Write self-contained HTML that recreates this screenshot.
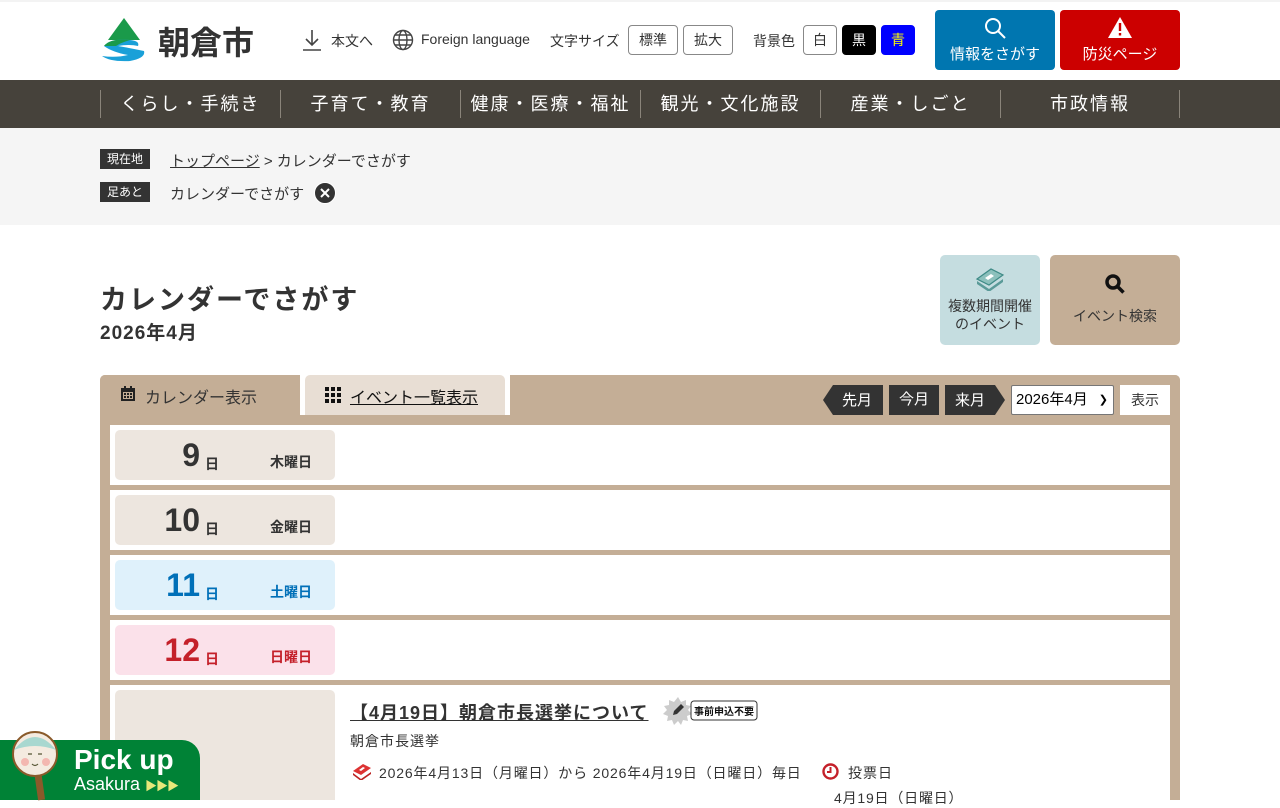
<!DOCTYPE html>
<html><head><meta charset="utf-8">
<style>
*{margin:0;padding:0;box-sizing:border-box}
body{width:1280px;height:800px;overflow:hidden;background:#fff;font-family:"Liberation Sans","Noto Sans CJK JP",sans-serif;color:#333;position:relative}
.a{position:absolute}
.hbtn{border:1px solid #888;border-radius:4px;font-size:14px;display:flex;align-items:center;justify-content:center;height:30px;top:25px}
.nav{top:80px;left:0;width:1280px;height:48px;background:#46423b}
.nav div{position:absolute;top:10px;height:28px;border-left:1px solid #8a847a;color:#fff;font-size:18px;letter-spacing:2px;text-align:center;line-height:28px;width:180px}
.crumb{top:128px;left:0;width:1280px;height:97px;background:#f5f5f5}
.lbl{background:#333;color:#fff;font-size:12px;width:50px;height:20px;line-height:20px;text-align:center}
.row{left:110px;width:1060px;height:60px;background:#fff}
.day{left:115px;width:220px;height:50px;border-radius:5px;background:#ede6df}
.num{position:absolute;right:135px;top:5px;font-size:32px;font-weight:bold;line-height:40px}
.ni{position:absolute;left:90px;top:24px;font-size:14px;font-weight:bold}
.wk{position:absolute;left:155px;top:22px;font-size:14px;font-weight:bold}
</style></head><body>
<div class="a" style="left:0;top:0;width:1280px;height:2px;background:#f3f3f3"></div>
<svg class="a" style="left:100px;top:18px" width="48" height="44" viewBox="0 0 48 44">
<polygon points="24,0 40,22 8,22" fill="#1a9a4a"/>
<path d="M4 28 Q10 20 30 22 Q40 23 38 28 Q30 26 18 28 Q30 30 44 33 Q46 40 30 43 Q10 44 2 38 Q16 40 28 37 Q12 34 4 28Z" fill="#1aa0d8"/>
<path d="M4 28 Q10 20 30 22 Q20 25 16 28Z" fill="#1a9a4a"/>
</svg>
<div class="a" style="left:158px;top:18px;font-size:32px;font-weight:bold;color:#333">朝倉市</div>
<svg class="a" style="left:302px;top:29px" width="20" height="22" viewBox="0 0 20 22" fill="none" stroke="#444" stroke-width="1.6"><path d="M10 1v15M4 10l6 6 6-6M1 21h18"/></svg>
<div class="a" style="left:331px;top:31px;font-size:14px">本文へ</div>
<svg class="a" style="left:392px;top:29px" width="22" height="22" viewBox="0 0 22 22" fill="none" stroke="#444" stroke-width="1.4"><circle cx="11" cy="11" r="9.5"/><ellipse cx="11" cy="11" rx="4" ry="9.5"/><path d="M1.5 11h19M3 6h16M3 16h16"/></svg>
<div class="a" style="left:421px;top:31px;font-size:14px">Foreign language</div>
<div class="a" style="left:550px;top:31px;font-size:14px">文字サイズ</div>
<div class="a hbtn" style="left:628px;width:50px">標準</div>
<div class="a hbtn" style="left:683px;width:50px">拡大</div>
<div class="a" style="left:753px;top:31px;font-size:14px">背景色</div>
<div class="a hbtn" style="left:803px;width:34px">白</div>
<div class="a hbtn" style="left:842px;width:34px;background:#000;color:#fff;border-color:#000">黒</div>
<div class="a hbtn" style="left:881px;width:34px;background:#00f;color:#ff0;border-color:#00f">青</div>
<div class="a" style="left:935px;top:10px;width:120px;height:60px;background:#0076b0;border-radius:4px;color:#fff;text-align:center">
<svg style="margin-top:7px" width="22" height="22" viewBox="0 0 22 22" fill="none" stroke="#fff" stroke-width="2"><circle cx="9" cy="9" r="7"/><path d="M14 14l7 7"/></svg>
<div style="font-size:15px;margin-top:-1px">情報をさがす</div></div>
<div class="a" style="left:1060px;top:10px;width:120px;height:60px;background:#cc0000;border-radius:4px;color:#fff;text-align:center">
<svg style="margin-top:7px" width="24" height="21" viewBox="0 0 24 21"><polygon points="12,0 24,21 0,21" fill="#fff"/><rect x="10.8" y="6" width="2.4" height="8" fill="#c00"/><rect x="10.8" y="16" width="2.4" height="2.5" fill="#c00"/></svg>
<div style="font-size:15px;margin-top:0">防災ページ</div></div>
<div class="a nav">
<div style="left:100px">くらし・手続き</div>
<div style="left:280px">子育て・教育</div>
<div style="left:460px">健康・医療・福祉</div>
<div style="left:640px">観光・文化施設</div>
<div style="left:820px">産業・しごと</div>
<div style="left:1000px;border-right:1px solid #8a847a">市政情報</div>
</div>
<div class="a crumb"></div>
<div class="a lbl" style="left:100px;top:149px">現在地</div>
<div class="a" style="left:170px;top:150px;font-size:15px"><span style="text-decoration:underline">トップページ</span> &gt; カレンダーでさがす</div>
<div class="a lbl" style="left:100px;top:182px">足あと</div>
<div class="a" style="left:170px;top:183px;font-size:15px">カレンダーでさがす</div>
<svg class="a" style="left:314px;top:182px" width="22" height="22" viewBox="0 0 22 22"><circle cx="11" cy="11" r="10.5" fill="#333" stroke="#fff" stroke-width="1"/><path d="M7 7l8 8M15 7l-8 8" stroke="#fff" stroke-width="2"/></svg>
<div class="a" style="left:100px;top:278px;font-size:27px;font-weight:bold;letter-spacing:2px">カレンダーでさがす</div>
<div class="a" style="left:100px;top:318px;font-size:19px;font-weight:bold;letter-spacing:1px">2026年4月</div>
<div class="a" style="left:940px;top:255px;width:100px;height:90px;background:#c5dde0;border-radius:5px;text-align:center;font-size:14px;line-height:18px">
<svg style="margin-top:12px" width="30" height="24" viewBox="0 0 30 24" fill="#5a9a98"><path d="M2 12l14-10 12 6-14 10z" fill="#8cc0bc" stroke="#3e8a86" stroke-width="1.2"/><path d="M2 14l12 8 14-10v3L14 25 2 17z"/><path d="M10 11l6-4 3 2-6 4z" fill="#fff"/></svg>
<div style="margin-top:2px">複数期間開催<br>のイベント</div></div>
<div class="a" style="left:1050px;top:255px;width:130px;height:90px;background:#c4ae96;border-radius:5px;text-align:center;font-size:14px">
<svg style="margin-top:18px" width="22" height="22" viewBox="0 0 22 22" fill="none" stroke="#111" stroke-width="3.5"><circle cx="9" cy="9" r="6"/><path d="M13.5 13.5l6 6"/></svg>
<div style="margin-top:8px">イベント検索</div></div>
<div class="a" style="left:100px;top:375px;width:1080px;height:425px;background:#c4ae96;border-radius:5px 5px 0 0"></div>
<div class="a" style="left:300px;top:375px;width:210px;height:40px;background:#fff"></div>
<div class="a" style="left:305px;top:375px;width:200px;height:40px;background:#e8ded4;border-radius:5px 5px 0 0"></div>
<div class="a" style="left:100px;top:375px;width:200px;height:40px;border-radius:5px 5px 0 0;background:#c4ae96"></div>
<div class="a" style="left:510px;top:375px;width:670px;height:40px;border-radius:5px 5px 0 0;background:#c4ae96"></div>
<svg class="a" style="left:120px;top:386px" width="16" height="16" viewBox="0 0 16 16"><rect x="1" y="2" width="14" height="13" fill="#222"/><rect x="3" y="6" width="10" height="7" fill="#c4ae96"/><path d="M4 7h2v2H4zM7 7h2v2H7zM10 7h2v2h-2zM4 10h2v2H4zM7 10h2v2H7zM10 10h2v2h-2z" fill="#222"/><rect x="4" y="0" width="2" height="4" fill="#222"/><rect x="10" y="0" width="2" height="4" fill="#222"/></svg>
<div class="a" style="left:145px;top:384px;font-size:16px">カレンダー表示</div>
<svg class="a" style="left:325px;top:387px" width="16" height="16" viewBox="0 0 16 16" fill="#111"><rect x="0" y="0" width="4" height="4"/><rect x="6" y="0" width="4" height="4"/><rect x="12" y="0" width="4" height="4"/><rect x="0" y="6" width="4" height="4"/><rect x="6" y="6" width="4" height="4"/><rect x="12" y="6" width="4" height="4"/><rect x="0" y="12" width="4" height="4"/><rect x="6" y="12" width="4" height="4"/><rect x="12" y="12" width="4" height="4"/></svg>
<div class="a" style="left:350px;top:384px;font-size:16px;text-decoration:underline;color:#111">イベント一覧表示</div>
<svg class="a" style="left:823px;top:385px" width="60" height="30"><polygon points="10,0 60,0 60,30 10,30 0,15" fill="#333"/><text x="34" y="20" fill="#fff" font-size="15" text-anchor="middle" font-family="Liberation Sans,Noto Sans CJK JP,sans-serif">先月</text></svg>
<div class="a" style="left:889px;top:385px;width:50px;height:30px;background:#333;color:#fff;font-size:15px;line-height:30px;text-align:center">今月</div>
<svg class="a" style="left:945px;top:385px" width="60" height="30"><polygon points="0,0 50,0 60,15 50,30 0,30" fill="#333"/><text x="25" y="20" fill="#fff" font-size="15" text-anchor="middle" font-family="Liberation Sans,Noto Sans CJK JP,sans-serif">来月</text></svg>
<div class="a" style="left:1011px;top:385px;width:103px;height:30px;background:#fff;border:1px solid #767676;border-radius:2px;font-size:15px;line-height:28px;padding-left:4px;color:#000">2026年4月<span style="position:absolute;right:5px;top:0;font-size:11px">&#10095;</span></div>
<div class="a" style="left:1120px;top:385px;width:50px;height:30px;background:#fff;font-size:14px;line-height:30px;text-align:center">表示</div>
<div class="a row" style="top:425px"></div>
<div class="a row" style="top:490px"></div>
<div class="a row" style="top:555px"></div>
<div class="a row" style="top:620px"></div>
<div class="a row" style="top:685px;height:115px"></div>
<div class="a day" style="top:430px"><span class="num">9</span><span class="ni">日</span><span class="wk">木曜日</span></div>
<div class="a day" style="top:495px"><span class="num">10</span><span class="ni">日</span><span class="wk">金曜日</span></div>
<div class="a day" style="top:560px;background:#dff1fb;color:#0070b8"><span class="num">11</span><span class="ni">日</span><span class="wk">土曜日</span></div>
<div class="a day" style="top:625px;background:#fbe1ea;color:#c4202a"><span class="num">12</span><span class="ni">日</span><span class="wk">日曜日</span></div>
<div class="a day" style="top:690px;height:110px;border-radius:5px 5px 0 0"></div>
<div class="a" style="left:350px;top:699px;font-size:18px;font-weight:bold;text-decoration:underline;letter-spacing:1px">【4月19日】朝倉市長選挙について</div>
<svg class="a" style="left:663px;top:696px" width="96" height="30" viewBox="0 0 96 30"><polygon points="15,1 18,6 23,4 23,9 28,10 25,14 29,18 24,20 25,25 20,24 18,29 15,25 11,29 9,24 4,25 5,20 0,18 4,14 1,10 6,9 6,4 11,6" fill="#ccc"/><rect x="28" y="5" width="66" height="19" rx="3" fill="#fff" stroke="#333"/><path d="M10 19l1-4 7-7 3 3-7 7z" fill="#333"/><text x="61" y="19" font-size="10" font-weight="bold" text-anchor="middle" fill="#111" font-family="Liberation Sans,Noto Sans CJK JP,sans-serif">事前申込不要</text></svg>
<div class="a" style="left:350px;top:731px;font-size:14px;letter-spacing:1px">朝倉市長選挙</div>
<svg class="a" style="left:352px;top:763px" width="20" height="17" viewBox="0 0 20 17"><path d="M1 8l10-7 8 4-10 7z" fill="#d33"/><path d="M1 10l8 6 10-7v2L9 18 1 12z" fill="#b22"/><path d="M7 7l4-3 2 1-4 3z" fill="#fff"/></svg>
<div class="a" style="left:379px;top:763px;font-size:14px;letter-spacing:0.85px">2026年4月13日（月曜日）から 2026年4月19日（日曜日）毎日</div>
<svg class="a" style="left:822px;top:763px" width="17" height="17" viewBox="0 0 17 17"><circle cx="8.5" cy="8.5" r="7" fill="none" stroke="#c4202a" stroke-width="2.4"/><path d="M8.5 4v5H5" fill="none" stroke="#c4202a" stroke-width="2"/></svg>
<div class="a" style="left:848px;top:763px;font-size:14px;letter-spacing:1px">投票日</div>
<div class="a" style="left:834px;top:788px;font-size:14px;letter-spacing:0.8px">4月19日（日曜日）</div>
<div class="a" style="left:0;top:740px;width:200px;height:60px;background:#008236;border-radius:0 18px 0 0"></div>
<div class="a" style="left:36px;top:770px;width:7px;height:30px;background:#8a5a2a;transform:rotate(-8deg)"></div>
<svg class="a" style="left:10px;top:730px" width="50" height="48" viewBox="0 0 50 48"><circle cx="25" cy="24" r="22" fill="#f4ebe0" stroke="#8a5a2a" stroke-width="2"/><path d="M4 20 Q25 -6 46 20 Q25 12 4 20z" fill="#a8d8d0"/><circle cx="15" cy="32" r="4" fill="#f3b7b0"/><circle cx="36" cy="32" r="4" fill="#f3b7b0"/><path d="M18 24h4M28 24h4M22 34q3 3 6 0" stroke="#553" stroke-width="1.2" fill="none"/></svg>
<div class="a" style="left:74px;top:744px;font-size:28px;font-weight:bold;color:#fff">Pick up</div>
<div class="a" style="left:74px;top:774px;font-size:18px;color:#fff">Asakura <span style="color:#e8e87a;font-size:12px;letter-spacing:-1px">▶▶▶</span></div>
</body></html>
